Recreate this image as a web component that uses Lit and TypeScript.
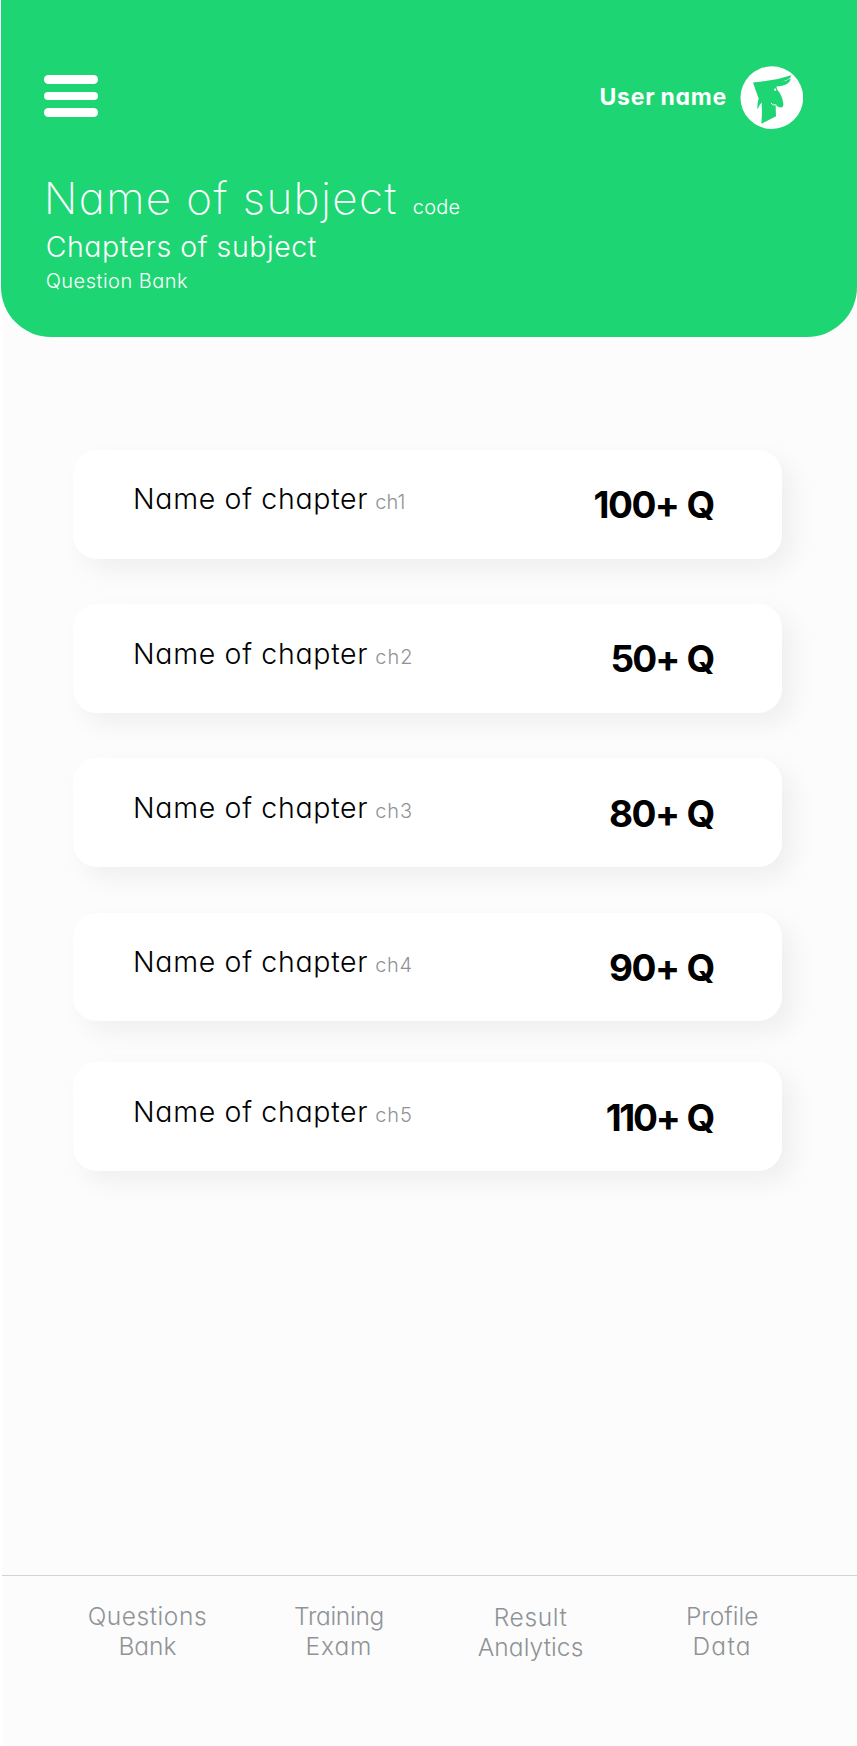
import { LitElement, html, css } from "lit";
import { customElement, property } from "lit/decorators.js";

interface Chapter { code: string; count: string; codeSpacing: number; countSpacing: number; }
interface NavItem { lines: { text: string; spacing: number }[]; lowered?: boolean; }

const CHAPTERS: Chapter[] = [
  { code: "ch1", count: "100+", codeSpacing: 0.1, countSpacing: -1.5 },
  { code: "ch2", count: "50+", codeSpacing: 1, countSpacing: -1.9 },
  { code: "ch3", count: "80+", codeSpacing: 0.9, countSpacing: -1.55 },
  { code: "ch4", count: "90+", codeSpacing: 0.7, countSpacing: -1.55 },
  { code: "ch5", count: "110+", codeSpacing: 0.9, countSpacing: -2.29 },
];

const NAV: NavItem[] = [
  { lines: [{ text: "Questions", spacing: 0.55 }, { text: "Bank", spacing: 0 }] },
  { lines: [{ text: "Training", spacing: -0.3 }, { text: "Exam", spacing: 0.9 }] },
  { lines: [{ text: "Result", spacing: 0.6 }, { text: "Analytics", spacing: 0.1 }], lowered: true },
  { lines: [{ text: "Profile", spacing: 0 }, { text: "Data", spacing: 1.3 }] },
];

@customElement("app-header")
class AppHeader extends LitElement {
  static styles = css`
    :host { display: block; box-sizing: border-box; height: 337.4px; margin: 0 0.5px 0 1px; padding: 66px 54px 0 42.7px; background: #1dd572; color: #fff; border-radius: 0 0 50px 50px; }
    .bar { display: flex; justify-content: space-between; align-items: center; height: 63px; }
    .menu { display: flex; flex-direction: column; gap: 8px; width: 54.6px; margin-bottom: 3px; padding: 0; border: 0; background: none; }
    .menu i { display: block; height: 8.7px; border-radius: 4.35px; background: #fff; }
    .user { display: flex; align-items: center; gap: 12.5px; }
    .name { font-size: 23px; line-height: 28px; font-weight: 650; letter-spacing: 0.75px; word-spacing: -1px; margin-bottom: 2px; white-space: nowrap; }
    .avatar { display: block; width: 63px; height: 63px; }
    h1 { display: flex; align-items: baseline; margin: 44px 0 0; height: 50px; font-size: 44px; line-height: 50px; font-weight: 250; letter-spacing: 1.4px; white-space: nowrap; }
    .code { margin-left: 15px; font-size: 20px; line-height: 24px; font-weight: 300; letter-spacing: 0.2px; }
    h2 { margin: 5.8px 0 0 2px; font-size: 28.5px; line-height: 36px; font-weight: 280; letter-spacing: 0.55px; }
    p { margin: 3px 0 0 2px; font-size: 20px; line-height: 26px; font-weight: 300; letter-spacing: 0.48px; }
  `;
  render() {
    return html`
      <div class="bar">
        <button class="menu" aria-label="Menu"><i></i><i></i><i></i></button>
        <div class="user">
          <span class="name">User name</span>
          <svg class="avatar" viewBox="477 48.5 189 189">
            <circle cx="572.5" cy="143.5" r="94" fill="#fff"/>
            <path fill="#1dd572" d="M516 98L558 93Q598 87 631 76Q630 84 620 89Q610 94 597 96Q614 96 629 86Q628 98 613 105Q601 110 586 110Q587 119 596 129Q605 144 607 161Q608 172 600 173Q592 173 586 167L584 168L585 199L541 222L543 190L542 158Q534 165 530 178Q527 169 533 146Q525 125 516 98Z"/>
            <circle cx="582.5" cy="119.5" r="3.3" fill="#fff"/>
            <path d="M570 160Q576 168 586 165" fill="none" stroke="#fff" stroke-width="3"/>
          </svg>
        </div>
      </div>
      <h1>Name of subject<span class="code">code</span></h1>
      <h2>Chapters of subject</h2>
      <p>Question Bank</p>
    `;
  }
}

@customElement("chapter-card")
class ChapterCard extends LitElement {
  @property({ attribute: false }) chapter!: Chapter;
  static styles = css`
    :host { display: flex; justify-content: space-between; align-items: flex-start; box-sizing: border-box; height: 108.8px; padding: 31.6px 66.3px 0 60px; border-radius: 24px; background: #fff; box-shadow: 11px 11px 26px rgba(0, 0, 0, 0.055); white-space: nowrap; }
    .title { display: flex; align-items: baseline; font-size: 28.5px; line-height: 36px; font-weight: 290; letter-spacing: 0.68px; color: #000; }
    .code { margin-left: 7px; font-size: 20px; line-height: 24px; font-weight: 300; color: #8f9396; }
    .count { display: flex; gap: 8px; margin-top: 1.8px; font-size: 37px; line-height: 44px; font-weight: 700; color: #000; }
  `;
  render() {
    const c = this.chapter;
    return html`
      <div class="title">Name of chapter<span class="code" style="letter-spacing:${c.codeSpacing}px">${c.code}</span></div>
      <div class="count"><span style="letter-spacing:${c.countSpacing}px">${c.count}</span><span>Q</span></div>
    `;
  }
}

@customElement("app-nav")
class AppNav extends LitElement {
  static styles = css`
    :host { display: grid; grid-template-columns: repeat(4, 191.6px); box-sizing: border-box; height: 171px; margin-left: 2px; padding: 25.4px 0 0 49.6px; border-top: 1px solid #d2d3d4; color: #8f9396; }
    .item { text-align: center; font-size: 24.5px; line-height: 30px; font-weight: 300; }
    .item.lowered { padding-top: 1px; }
    .item span { display: block; }
  `;
  render() {
    return NAV.map((n) => html`<div class="item ${n.lowered ? "lowered" : ""}">
      ${n.lines.map((l) => html`<span style="letter-spacing:${l.spacing}px">${l.text}</span>`)}
    </div>`);
  }
}

@customElement("app-root")
class AppRoot extends LitElement {
  static styles = css`
    :host { display: flex; flex-direction: column; box-sizing: border-box; width: 857px; height: 1746px; overflow: hidden; background: linear-gradient(90deg, #fff 2px, #fcfcfc 2px); font-family: Inter, "Liberation Sans", sans-serif; font-feature-settings: "cv11" 1; }
    .list { flex: 1; padding: 112.4px 75.5px 0 73px; }
    chapter-card { margin-bottom: 45.5px; }
    chapter-card:nth-last-child(2) { margin-bottom: 41px; }
  `;
  render() {
    return html`
      <app-header></app-header>
      <main class="list">${CHAPTERS.map((c) => html`<chapter-card .chapter=${c}></chapter-card>`)}</main>
      <app-nav></app-nav>
    `;
  }
}
